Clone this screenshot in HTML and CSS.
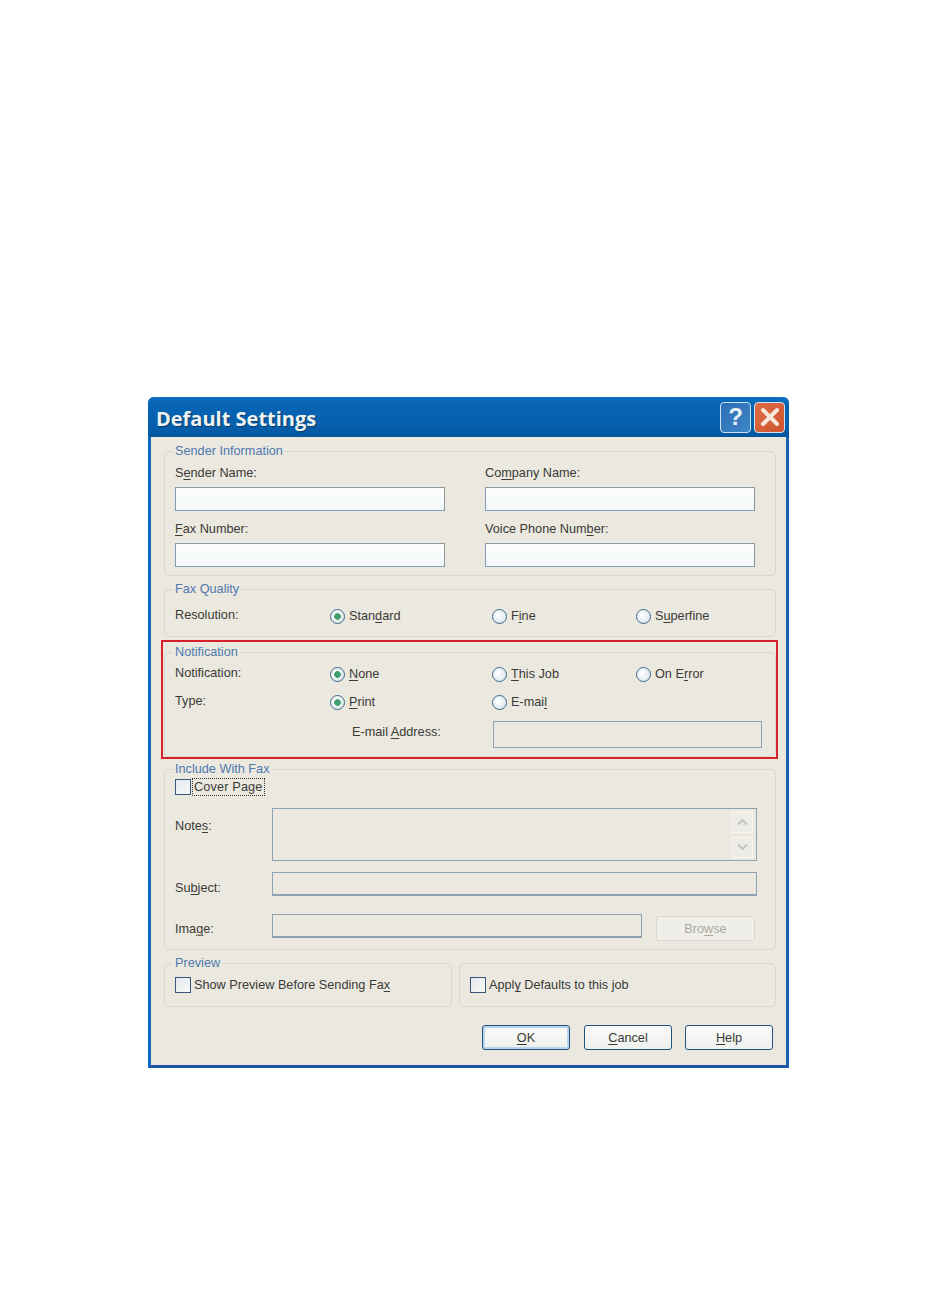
FILE: index.html
```html
<!DOCTYPE html>
<html lang="en">
<head>
<meta charset="utf-8">
<title>Default Settings</title>
<link rel="stylesheet" href="styles.css">
</head>
<body>
<div class="window">
  <header class="titlebar">
    <h1 class="title">Default Settings</h1>
    <div class="controls">
      <span class="ctl ctl-help">?</span>
      <span class="ctl ctl-close"><svg width="20" height="20" viewBox="0 0 20 20"><path d="M3 3 L17 17 M17 3 L3 17" stroke="#f6e6dc" stroke-width="4" stroke-linecap="round"/></svg></span>
    </div>
  </header>
  <main class="content">
    <fieldset class="group sender">
      <legend>Sender Information</legend>
      <div class="sender-grid">
        <div class="field"><label>S<u>e</u>nder Name:</label><div class="input"></div></div>
        <div class="field"><label>Co<u>m</u>pany Name:</label><div class="input"></div></div>
        <div class="field"><label><u>F</u>ax Number:</label><div class="input"></div></div>
        <div class="field"><label>Voice Phone Num<u>b</u>er:</label><div class="input"></div></div>
      </div>
    </fieldset>

    <fieldset class="group quality">
      <legend>Fax Quality</legend>
      <div class="options">
        <span class="opt-label">Resolution:</span>
        <span class="radio-item"><i class="radio on"></i><span>Stan<u>d</u>ard</span></span>
        <span class="radio-item"><i class="radio"></i><span>F<u>i</u>ne</span></span>
        <span class="radio-item"><i class="radio"></i><span>S<u>u</u>perfine</span></span>
      </div>
    </fieldset>

    <div class="highlighted">
      <fieldset class="group notification">
        <legend>Notification</legend>
        <div class="options notif-row">
          <span class="opt-label">Notification:</span>
          <span class="radio-item"><i class="radio on"></i><span><u>N</u>one</span></span>
          <span class="radio-item"><i class="radio"></i><span><u>T</u>his Job</span></span>
          <span class="radio-item"><i class="radio"></i><span>On E<u>r</u>ror</span></span>
        </div>
        <div class="options type-row">
          <span class="opt-label">Type:</span>
          <span class="radio-item"><i class="radio on"></i><span><u>P</u>rint</span></span>
          <span class="radio-item"><i class="radio"></i><span>E-mai<u>l</u></span></span>
        </div>
        <div class="email-row">
          <label>E-mail <u>A</u>ddress:</label>
          <div class="input disabled email-input"></div>
        </div>
      </fieldset>
      <div class="redbox"></div>
    </div>

    <fieldset class="group include">
      <legend>Include With Fax</legend>
      <div class="check-item cover"><i class="check"></i><span class="focus">Cover Page</span></div>
      <div class="inc-row notes-row">
        <label>Note<u>s</u>:</label>
        <div class="input disabled notes">
          <div class="scroll">
            <span class="arrow"><svg width="13" height="8" viewBox="0 0 13 8"><path d="M2 6.5 L6.5 2 L11 6.5" fill="none" stroke="#c3c6c4" stroke-width="2.2"/></svg></span>
            <span class="arrow"><svg width="13" height="8" viewBox="0 0 13 8"><path d="M2 1.5 L6.5 6 L11 1.5" fill="none" stroke="#c3c6c4" stroke-width="2.2"/></svg></span>
          </div>
        </div>
      </div>
      <div class="inc-row subject-row">
        <label>Su<u>b</u>ject:</label>
        <div class="input disabled subject"></div>
      </div>
      <div class="inc-row image-row">
        <label>Ima<u>g</u>e:</label>
        <div class="input disabled image"></div>
        <span class="browse"><span>Bro<u>w</u>se</span></span>
      </div>
    </fieldset>

    <div class="bottom-groups">
      <fieldset class="group preview">
        <legend>Preview</legend>
        <div class="check-item"><i class="check"></i><span>Show Preview Before Sending Fa<u>x</u></span></div>
      </fieldset>
      <div class="group apply">
        <div class="check-item"><i class="check"></i><span>Appl<u>y</u> Defaults to this job</span></div>
      </div>
    </div>

    <div class="buttons">
      <span class="btn btn-default"><span><u>O</u>K</span></span>
      <span class="btn"><span><u>C</u>ancel</span></span>
      <span class="btn"><span><u>H</u>elp</span></span>
    </div>
  </main>
</div>
</body>
</html>
```

FILE: styles.css
```css
* { box-sizing: border-box; }
html, body { margin: 0; padding: 0; background: #fff; }
body {
  padding: 397px 0 0 148px;
  height: 1299px;
  font-family: "Liberation Sans", Arial, sans-serif;
  font-size: 12.7px;
  color: #3a3a36;
}
u { text-decoration-thickness: 1px; text-underline-offset: 2px; }
i { display: block; font-style: normal; }

.window {
  width: 641px;
  height: 671px;
  display: flex;
  flex-direction: column;
  background: #ebe8e0;
  border-left: 3px solid #0f6dbf;
  border-right: 3px solid #1a62ae;
  border-bottom: 3px solid #1f56a4;
  border-radius: 6px 6px 0 0;
}
.titlebar {
  height: 40px;
  margin: 0 -3px;
  padding: 0 4px 0 8px;
  display: flex;
  align-items: center;
  justify-content: space-between;
  border-radius: 6px 6px 0 0;
  background: linear-gradient(#0d70c4 0, #0864b4 20%, #0660ae 70%, #04569e 100%);
}
.title {
  margin: 2px 0 0;
  font-family: "Open Sans", sans-serif;
  font-size: 20px;
  font-weight: 700;
  color: #eef3f4;
  text-shadow: 1px 1px 1px #0a3a68;
}
.controls { display: flex; gap: 3px; }
.ctl {
  width: 31px;
  height: 31px;
  display: flex;
  align-items: center;
  justify-content: center;
  border: 1px solid #cfe4f2;
  border-radius: 4px;
  font-family: "Liberation Sans", sans-serif;
  font-size: 24px;
  font-weight: 700;
  color: #e8f0f6;
}
.ctl-help { background: linear-gradient(135deg, #2b6fb4, #3f86c6); }
.ctl-close { background: linear-gradient(135deg, #de6c46, #cf5530); }

.content {
  flex: 1;
  padding: 7px 10px 0 13px;
  display: flex;
  flex-direction: column;
}
.group {
  margin: 0;
  min-width: 0;
  padding: 0 10px;
  border: 1px solid #d9d6ca;
  border-radius: 5px;
}
.group legend {
  margin-left: -2px;
  padding: 0 2px;
  color: #4f78ad;
  font-size: 12.7px;
  line-height: 14px;
}
label, .opt-label { white-space: nowrap; }

.input {
  background: linear-gradient(#fdfdfb, #f3f8fc);
  border: 1px solid #7f9db9;
  border-top-color: #8f9a9f;
  border-right-color: #8c9496;
}
.input.disabled {
  background: #ebe8e0;
  border-color: #8fa2b2;
}

.sender { height: 132px; flex: none; }
.sender-grid {
  display: grid;
  grid-template-columns: 270px 270px;
  column-gap: 40px;
  row-gap: 10px;
  padding-top: 7px;
}
.field label { display: block; line-height: 16px; height: 22px; }
.field .input { height: 24px; }

.quality { height: 55px; margin-top: 6px; flex: none; }
.options {
  display: grid;
  grid-template-columns: 155px 162px 144px 1fr;
  align-items: center;
  height: 18px;
}
.quality .options { margin-top: 11px; }
.opt-label { margin-bottom: 2px; }
.radio-item { display: flex; align-items: center; gap: 4px; white-space: nowrap; }
.radio {
  width: 15px;
  height: 15px;
  flex: none;
  border-radius: 50%;
  border: 1px solid #3f6a8c;
  background: radial-gradient(circle at 40% 40%, #fff, #cfe0ea);
}
.radio.on {
  background:
    radial-gradient(circle, #3f9f6e 0 3px, transparent 3.6px),
    radial-gradient(circle at 40% 40%, #fff, #d4dfe0);
}

.highlighted { position: relative; margin-top: 3px; flex: none; }
.redbox {
  position: absolute;
  left: -3px;
  right: -2px;
  top: 0;
  height: 119px;
  border: 2px solid #d8202c;
  pointer-events: none;
}
.notification { height: 112px; margin-top: 5px; }
.notif-row { margin-top: 6px; }
.type-row { margin-top: 10px; }
.email-row {
  display: flex;
  align-items: center;
  height: 27px;
  margin-top: 10px;
  padding-left: 177px;
}
.email-row label { width: 141px; flex: none; margin-bottom: 5px; }
.email-input { width: 269px; height: 27px; }

.include { height: 188px; margin-top: 5px; flex: none; }
.check-item { display: flex; align-items: center; gap: 3px; white-space: nowrap; }
.check {
  width: 16px;
  height: 16px;
  flex: none;
  border: 1px solid #35587a;
  background: linear-gradient(135deg, #e4e9ef, #f8f8f4);
}
.cover { gap: 2px; height: 18px; margin-top: 2px; }
.focus { outline: 1px dotted #333; line-height: 16px; padding: 0 1px; letter-spacing: .15px; }
.inc-row { display: flex; align-items: flex-start; }
.inc-row label { width: 97px; flex: none; }
.notes-row { margin-top: 12px; }
.notes-row label { padding-top: 11px; }
.notes { width: 485px; height: 53px; display: flex; justify-content: flex-end; padding: 2px 2px 2px 0; }
.scroll { display: flex; flex-direction: column; gap: 4px; width: 22px; margin-right: 1px; }
.arrow {
  flex: 1;
  display: flex;
  align-items: center;
  justify-content: center;
  background: #eeece6;
  border: 1px solid #f6f5f0;
}
.subject-row { margin-top: 11px; }
.subject-row label { padding-top: 9px; }
.subject { width: 485px; height: 24px; border-bottom: 2px solid #8196a8; }
.image-row { margin-top: 18px; }
.image-row label { padding-top: 8px; }
.image { width: 370px; height: 24px; border-bottom: 2px solid #8fa0a8; }
.browse {
  width: 99px;
  height: 25px;
  margin: 2px 0 0 14px;
  display: flex;
  align-items: center;
  justify-content: center;
  background: #efeee9;
  border: 1px solid #d8d8d0;
  border-radius: 3px;
  color: #a9a99f;
}

.bottom-groups { display: flex; gap: 7px; margin-top: 6px; flex: none; }
.preview { width: 288px; height: 51px; }
.preview .check-item { margin-top: 7px; }
.preview legend { margin-top: 1px; }
.apply { width: 317px; height: 44px; margin-top: 7px; display: flex; align-items: center; }

.buttons {
  display: flex;
  gap: 14px;
  margin-top: 18px;
  padding-left: 318px;
}
.btn {
  width: 88px;
  height: 25px;
  display: flex;
  align-items: center;
  justify-content: center;
  background: linear-gradient(#fbfbf8, #eef0ee);
  border: 1px solid #23527e;
  border-radius: 3px;
}
.btn:last-child { margin-left: -1px; }
.btn-default { box-shadow: inset 0 0 0 2px #b9d4ec; }
```
